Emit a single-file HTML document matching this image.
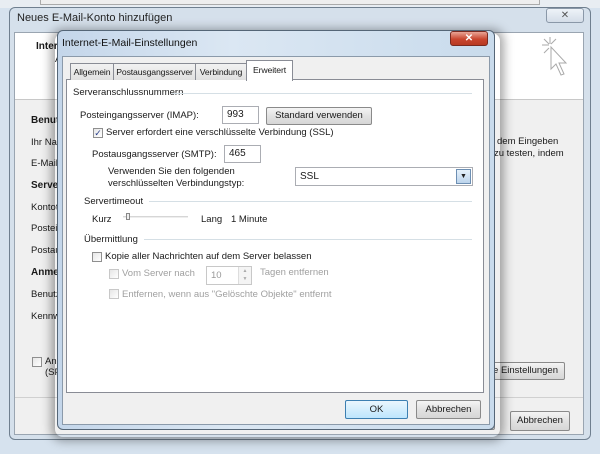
<!DOCTYPE html>
<html><head><meta charset="utf-8"><style>
*{box-sizing:border-box;margin:0;padding:0}
body{width:600px;height:454px;overflow:hidden;position:relative;background:#d6e2ee;font-family:"Liberation Sans",sans-serif;font-size:9.5px;color:#1a1a1a}
.a{position:absolute;white-space:nowrap}
.btn{position:absolute;border:1px solid #8a8a8a;border-radius:2px;background:linear-gradient(#f4f4f4,#e2e2e2 50%,#d6d6d6);text-align:center;font-size:9.5px}
.cb{position:absolute;width:10px;height:10px;border:1px solid #8f8f8f;background:linear-gradient(135deg,#e6e6e6,#fff)}
.inp{position:absolute;border:1px solid #abadb3;background:#fff;padding-left:4px}
.grp{position:absolute;height:1px;background:#d5dfe5}
.g{color:#a0a0a0}
.b{font-weight:bold}
.tb{font-size:8.7px;letter-spacing:-0.15px}
</style></head><body>
<div class="a" style="left:0;top:0;width:600px;height:8px;background:#e8edf2"></div>
<div class="a" style="left:40px;top:0;width:500px;height:5px;border:1px solid #aaa;border-top:none;background:#eee"></div>
<div class="a" style="left:9px;top:7px;width:582px;height:433px;background:#d5e0eb;border:1px solid #6f7f8f;border-radius:6px"></div>
<div class="a" style="left:17px;top:12px;font-size:11px;color:#222">Neues E-Mail-Konto hinzufügen</div>
<div class="a" style="left:546px;top:8px;width:38px;height:15px;border:1px solid #8a98a8;border-radius:3px;background:linear-gradient(#eef3f8,#d4dde8);text-align:center;font-size:10px;color:#555;line-height:13px">✕</div>
<div class="a" style="left:14px;top:32px;width:570px;height:403px;background:#f0f0f0;border:1px solid #9aa5b1"></div>
<div class="a" style="left:15px;top:33px;width:568px;height:67px;background:#fff;border-bottom:1px solid #c8c8c8"></div>
<div class="a b" style="left:36px;top:41px;font-size:10px">Intern</div>
<div class="a" style="left:55px;top:54px">All</div>
<svg class="a" style="left:538px;top:35px" width="34" height="46" viewBox="0 0 34 46"><g stroke="#aaa" fill="none" stroke-width="1"><path d="M12 2v7M4 10h7M6 4l5 5M18 4l-5 5M6 18l5-5"/><path d="M13 12l0 22 5-5 5 11 3-1-5-11 7 0z" fill="#fff"/></g></svg>
<div class="a b" style="left:31px;top:115px;font-size:10px">Benutz</div>
<div class="a" style="left:31px;top:137px">Ihr Nam</div>
<div class="a" style="left:31px;top:158px">E-Mail-A</div>
<div class="a b" style="left:31px;top:180px;font-size:10px">Server</div>
<div class="a" style="left:31px;top:202px">Kontoty</div>
<div class="a" style="left:31px;top:223px">Posteing</div>
<div class="a" style="left:31px;top:245px">Postaus</div>
<div class="a b" style="left:31px;top:267px;font-size:10px">Anmel</div>
<div class="a" style="left:31px;top:289px">Benutze</div>
<div class="a" style="left:31px;top:311px">Kennwo</div>
<div class="cb" style="left:32px;top:357px"></div>
<div class="a" style="left:45px;top:356px">Anm</div>
<div class="a" style="left:45px;top:367px">(SPA</div>
<div class="a" style="left:497px;top:136px">dem Eingeben</div>
<div class="a" style="left:494px;top:148px">zu testen, indem</div>
<div class="btn" style="left:470px;top:362px;width:95px;height:18px;line-height:16px;text-align:right;padding-right:6px">re Einstellungen</div>
<div class="a" style="left:15px;top:397px;width:568px;height:1px;background:#d0d0d0"></div>
<div class="btn" style="left:443px;top:411px;width:52px;height:19px"></div>
<div class="btn" style="left:510px;top:411px;width:60px;height:20px;line-height:18px">Abbrechen</div>
<div class="a" style="left:55px;top:33px;width:445px;height:404px;border-radius:8px;box-shadow:0 0 10px 4px rgba(0,0,0,.35)"></div>
<div class="a" style="left:57px;top:30px;width:438px;height:400px;background:linear-gradient(90deg,#c4d6ea,#dbe7f3 40%,#c9dbec);border:1px solid #556677;border-radius:6px"></div>
<div class="a" style="left:62px;top:37px;font-size:10.5px;color:#111">Internet-E-Mail-Einstellungen</div>
<div class="a" style="left:450px;top:31px;width:38px;height:15px;border:1px solid #7a2a20;border-radius:3px;background:linear-gradient(#e9a596,#c9462f 55%,#b83a22);color:#fff;text-align:center;font-size:10px;line-height:13px;font-weight:bold">✕</div>
<div class="a" style="left:62px;top:56px;width:428px;height:369px;background:#f0f0f0;border:1px solid #8b9aaa"></div>
<div class="a" style="left:66px;top:79px;width:418px;height:314px;background:#fff;border:1px solid #898c95"></div>
<div class="a tb" style="left:70px;top:63px;width:44px;height:17px;border:1px solid #898c95;border-bottom:none;background:linear-gradient(#f2f2f2,#e0e0e0);text-align:center;line-height:16px">Allgemein</div>
<div class="a tb" style="left:114px;top:63px;width:82px;height:17px;border:1px solid #898c95;border-bottom:none;border-left:none;background:linear-gradient(#f2f2f2,#e0e0e0);text-align:center;line-height:16px">Postausgangsserver</div>
<div class="a tb" style="left:196px;top:63px;width:51px;height:17px;border:1px solid #898c95;border-bottom:none;border-left:none;background:linear-gradient(#f2f2f2,#e0e0e0);text-align:center;line-height:16px">Verbindung</div>
<div class="a tb" style="left:246px;top:60px;width:47px;height:21px;border:1px solid #898c95;border-bottom:none;background:#fff;text-align:center;line-height:18px">Erweitert</div>
<div class="a" style="left:73px;top:87px">Serveranschlussnummern</div>
<div class="grp" style="left:172px;top:93px;width:300px"></div>
<div class="a" style="left:80px;top:110px">Posteingangsserver (IMAP):</div>
<div class="inp" style="left:222px;top:106px;width:37px;height:18px;line-height:16px;font-size:10px">993</div>
<div class="btn" style="left:266px;top:107px;width:106px;height:18px;line-height:16px">Standard verwenden</div>
<div class="cb" style="left:93px;top:128px;font-size:9px;line-height:8px;color:#2a3f8a;text-align:center">✓</div>
<div class="a" style="left:106px;top:127px">Server erfordert eine verschlüsselte Verbindung (SSL)</div>
<div class="a" style="left:92px;top:149px">Postausgangsserver (SMTP):</div>
<div class="inp" style="left:224px;top:145px;width:37px;height:18px;line-height:16px;font-size:10px">465</div>
<div class="a" style="left:108px;top:166px;line-height:12px">Verwenden Sie den folgenden<br>verschlüsselten Verbindungstyp:</div>
<div class="inp" style="left:295px;top:167px;width:178px;height:19px;line-height:17px;font-size:10px">SSL</div>
<div class="a" style="left:456px;top:169px;width:15px;height:15px;border:1px solid #6d8fb3;background:linear-gradient(#e6f1fb,#bcd4ec);text-align:center;font-size:7px;line-height:13px;color:#222">▼</div>
<div class="a" style="left:84px;top:196px">Servertimeout</div>
<div class="grp" style="left:149px;top:201px;width:323px"></div>
<div class="a" style="left:92px;top:214px">Kurz</div>
<div class="a" style="left:123px;top:216px;width:65px;height:2px;background:#d6d6d6;border-bottom:1px solid #eee"></div>
<div class="a" style="left:126px;top:213px;width:4px;height:7px;border:1px solid #888;background:#eee"></div>
<div class="a" style="left:201px;top:214px">Lang</div>
<div class="a" style="left:231px;top:214px">1 Minute</div>
<div class="a" style="left:84px;top:234px">Übermittlung</div>
<div class="grp" style="left:144px;top:239px;width:328px"></div>
<div class="cb" style="left:92px;top:252px"></div>
<div class="a" style="left:105px;top:251px">Kopie aller Nachrichten auf dem Server belassen</div>
<div class="cb" style="left:109px;top:269px;border-color:#c8c8c8"></div>
<div class="a g" style="left:122px;top:268px">Vom Server nach</div>
<div class="inp" style="left:206px;top:266px;width:46px;height:19px;line-height:17px;color:#999;border-color:#c8c8c8">10</div>
<div class="a" style="left:238px;top:267px;width:13px;height:17px;border-left:1px solid #ddd;background:#f4f4f4;font-size:5px;color:#aaa;text-align:center;line-height:8px">▲<br>▼</div>
<div class="a g" style="left:260px;top:267px">Tagen entfernen</div>
<div class="cb" style="left:109px;top:289px;border-color:#c8c8c8"></div>
<div class="a g" style="left:122px;top:289px">Entfernen, wenn aus "Gelöschte Objekte" entfernt</div>
<div class="btn" style="left:345px;top:400px;width:63px;height:19px;line-height:17px;border-color:#3c7fb1;background:linear-gradient(#eaf6fd,#bee6fd)">OK</div>
<div class="btn" style="left:416px;top:400px;width:65px;height:19px;line-height:17px">Abbrechen</div>
</body></html>
